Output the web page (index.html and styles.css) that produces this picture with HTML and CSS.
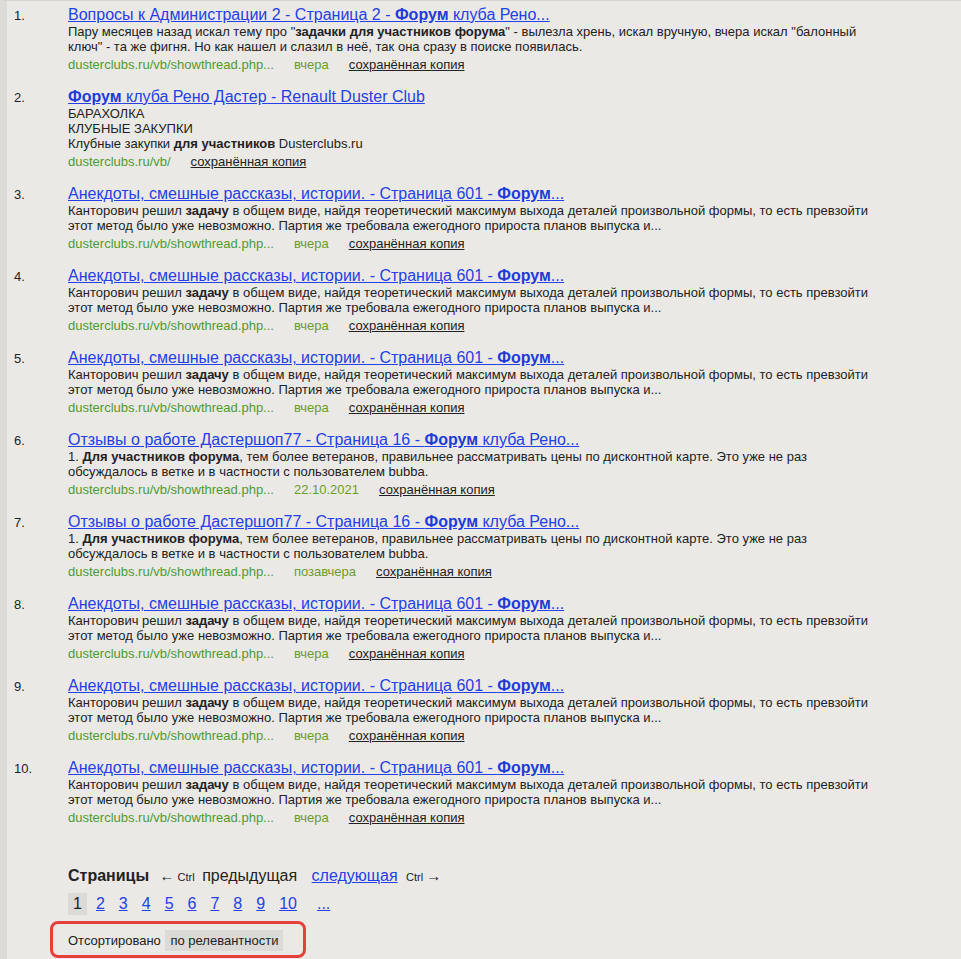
FILE: index.html
```html
<!DOCTYPE html>
<html lang="ru">
<head>
  <meta charset="UTF-8">
  <title>Поиск по форуму</title>
  <link rel="stylesheet" href="styles.css">
</head>
<body>
<div id="page">
  <ol class="results">
    <li class="item">
      <span class="num">1.</span>
      <div class="body">
        <a class="title" href="#">Вопросы к Администрации 2 - Страница 2 - <b>Форум</b> клуба Рено...</a>
        <div class="text">Пару месяцев назад искал тему про "<b>задачки для участников форума</b>" - вылезла хрень, искал вручную, вчера искал "балонный ключ" - та же фигня. Но как нашел и слазил в неё, так она сразу в поиске появилась.</div>
        <div class="meta"><span class="url">dusterclubs.ru/vb/showthread.php...</span><span class="date">вчера</span><a class="copy" href="#">сохранённая копия</a></div>
      </div>
    </li>
    <li class="item">
      <span class="num">2.</span>
      <div class="body">
        <a class="title" href="#"><b>Форум</b> клуба Рено Дастер - Renault Duster Club</a>
        <div class="text">БАРАХОЛКА<br>КЛУБНЫЕ ЗАКУПКИ<br>Клубные закупки <b>для участников</b> Dusterclubs.ru</div>
        <div class="meta"><span class="url">dusterclubs.ru/vb/</span><a class="copy" href="#">сохранённая копия</a></div>
      </div>
    </li>
    <li class="item">
      <span class="num">3.</span>
      <div class="body">
        <a class="title" href="#">Анекдоты, смешные рассказы, истории. - Страница 601 - <b>Форум</b>...</a>
        <div class="text">Канторович решил <b>задачу</b> в общем виде, найдя теоретический максимум выхода деталей произвольной формы, то есть превзойти этот метод было уже невозможно. Партия же требовала ежегодного прироста планов выпуска и...</div>
        <div class="meta"><span class="url">dusterclubs.ru/vb/showthread.php...</span><span class="date">вчера</span><a class="copy" href="#">сохранённая копия</a></div>
      </div>
    </li>
    <li class="item">
      <span class="num">4.</span>
      <div class="body">
        <a class="title" href="#">Анекдоты, смешные рассказы, истории. - Страница 601 - <b>Форум</b>...</a>
        <div class="text">Канторович решил <b>задачу</b> в общем виде, найдя теоретический максимум выхода деталей произвольной формы, то есть превзойти этот метод было уже невозможно. Партия же требовала ежегодного прироста планов выпуска и...</div>
        <div class="meta"><span class="url">dusterclubs.ru/vb/showthread.php...</span><span class="date">вчера</span><a class="copy" href="#">сохранённая копия</a></div>
      </div>
    </li>
    <li class="item">
      <span class="num">5.</span>
      <div class="body">
        <a class="title" href="#">Анекдоты, смешные рассказы, истории. - Страница 601 - <b>Форум</b>...</a>
        <div class="text">Канторович решил <b>задачу</b> в общем виде, найдя теоретический максимум выхода деталей произвольной формы, то есть превзойти этот метод было уже невозможно. Партия же требовала ежегодного прироста планов выпуска и...</div>
        <div class="meta"><span class="url">dusterclubs.ru/vb/showthread.php...</span><span class="date">вчера</span><a class="copy" href="#">сохранённая копия</a></div>
      </div>
    </li>
    <li class="item">
      <span class="num">6.</span>
      <div class="body">
        <a class="title" href="#">Отзывы о работе Дастершоп77 - Страница 16 - <b>Форум</b> клуба Рено...</a>
        <div class="text">1. <b>Для участников форума</b>, тем более ветеранов, правильнее рассматривать цены по дисконтной карте. Это уже не раз обсуждалось в ветке и в частности с пользователем bubba.</div>
        <div class="meta"><span class="url">dusterclubs.ru/vb/showthread.php...</span><span class="date">22.10.2021</span><a class="copy" href="#">сохранённая копия</a></div>
      </div>
    </li>
    <li class="item">
      <span class="num">7.</span>
      <div class="body">
        <a class="title" href="#">Отзывы о работе Дастершоп77 - Страница 16 - <b>Форум</b> клуба Рено...</a>
        <div class="text">1. <b>Для участников форума</b>, тем более ветеранов, правильнее рассматривать цены по дисконтной карте. Это уже не раз обсуждалось в ветке и в частности с пользователем bubba.</div>
        <div class="meta"><span class="url">dusterclubs.ru/vb/showthread.php...</span><span class="date">позавчера</span><a class="copy" href="#">сохранённая копия</a></div>
      </div>
    </li>
    <li class="item">
      <span class="num">8.</span>
      <div class="body">
        <a class="title" href="#">Анекдоты, смешные рассказы, истории. - Страница 601 - <b>Форум</b>...</a>
        <div class="text">Канторович решил <b>задачу</b> в общем виде, найдя теоретический максимум выхода деталей произвольной формы, то есть превзойти этот метод было уже невозможно. Партия же требовала ежегодного прироста планов выпуска и...</div>
        <div class="meta"><span class="url">dusterclubs.ru/vb/showthread.php...</span><span class="date">вчера</span><a class="copy" href="#">сохранённая копия</a></div>
      </div>
    </li>
    <li class="item">
      <span class="num">9.</span>
      <div class="body">
        <a class="title" href="#">Анекдоты, смешные рассказы, истории. - Страница 601 - <b>Форум</b>...</a>
        <div class="text">Канторович решил <b>задачу</b> в общем виде, найдя теоретический максимум выхода деталей произвольной формы, то есть превзойти этот метод было уже невозможно. Партия же требовала ежегодного прироста планов выпуска и...</div>
        <div class="meta"><span class="url">dusterclubs.ru/vb/showthread.php...</span><span class="date">вчера</span><a class="copy" href="#">сохранённая копия</a></div>
      </div>
    </li>
    <li class="item">
      <span class="num">10.</span>
      <div class="body">
        <a class="title" href="#">Анекдоты, смешные рассказы, истории. - Страница 601 - <b>Форум</b>...</a>
        <div class="text">Канторович решил <b>задачу</b> в общем виде, найдя теоретический максимум выхода деталей произвольной формы, то есть превзойти этот метод было уже невозможно. Партия же требовала ежегодного прироста планов выпуска и...</div>
        <div class="meta"><span class="url">dusterclubs.ru/vb/showthread.php...</span><span class="date">вчера</span><a class="copy" href="#">сохранённая копия</a></div>
      </div>
    </li>
  </ol>

  <div class="pager">
    <div class="pager-head">
      <b class="pager-label">Страницы</b>
      <span class="hint"><span class="arrow">&larr;</span> Ctrl</span>
      <span class="prev">предыдущая</span>
      <a class="next" href="#">следующая</a>
      <span class="hint">Ctrl <span class="arrow">&rarr;</span></span>
    </div>
    <div class="pages">
      <span class="page current">1</span>
      <a class="page" href="#">2</a>
      <a class="page" href="#">3</a>
      <a class="page" href="#">4</a>
      <a class="page" href="#">5</a>
      <a class="page" href="#">6</a>
      <a class="page" href="#">7</a>
      <a class="page" href="#">8</a>
      <a class="page" href="#">9</a>
      <a class="page" href="#">10</a>
      <a class="page more" href="#">...</a>
    </div>
  </div>

  <div class="sort">
    <span class="sort-label">Отсортировано</span>
    <span class="sort-value">по релевантности</span>
  </div>
</div>
</body>
</html>
```

FILE: styles.css
```css
html, body {
  margin: 0;
  height: 100%;
}

body {
  font-family: "Liberation Sans", Arial, sans-serif;
  font-size: 13px;
  color: #222;
  background-color: #ebe9e6;
  overflow: hidden;
}

#page {
  min-height: 100%;
  border-top: 1px solid #d4d3d0;
  border-left: 7px solid #dcdbd7;
  box-sizing: border-box;
  padding: 4px 0 0 7px;
}

a {
  color: #2440e6;
}

.results {
  list-style: none;
  margin: 0;
  padding: 0;
}

.item {
  display: flex;
  align-items: baseline;
  margin-bottom: 14px;
}

.num {
  width: 54px;
  flex: none;
  font-size: 13px;
}

.body {
  width: 810px;
}

.title {
  display: block;
  font-size: 16px;
  line-height: 19px;
}

.title b {
  color: #1f3bd9;
}

.text {
  line-height: 15px;
}

.meta {
  margin-top: 3px;
  line-height: 16px;
}

.url {
  color: #4e9a33;
}

.date {
  color: #6b9b2b;
  margin-left: 20px;
}

.copy {
  color: #222;
  margin-left: 20px;
}

.pager {
  margin: 40px 0 0 54px;
}

.pager-head {
  font-size: 16px;
  line-height: 20px;
}

.pager-label {
  margin-right: 6px;
}

.hint {
  font-size: 11px;
}

.arrow {
  font-size: 15px;
}

.prev {
  margin: 0 10px 0 3px;
}

.next {
  margin-right: 4px;
}

.pages {
  margin-top: 6px;
  display: flex;
  gap: 4px;
  font-size: 16px;
  line-height: 22px;
}

.page {
  padding: 0 5px;
}

.page.current {
  background-color: #dcdad6;
}

.page.more {
  margin-left: 6px;
}

.sort {
  display: inline-block;
  margin: 6px 0 0 36px;
  padding: 6px 20px 4px 15px;
  border: 3px solid #e5413a;
  border-radius: 8px;
  line-height: 21px;
}

.sort-value {
  display: inline-block;
  background-color: #dcdad6;
  padding: 0 5px;
  margin-left: 1px;
}
```
